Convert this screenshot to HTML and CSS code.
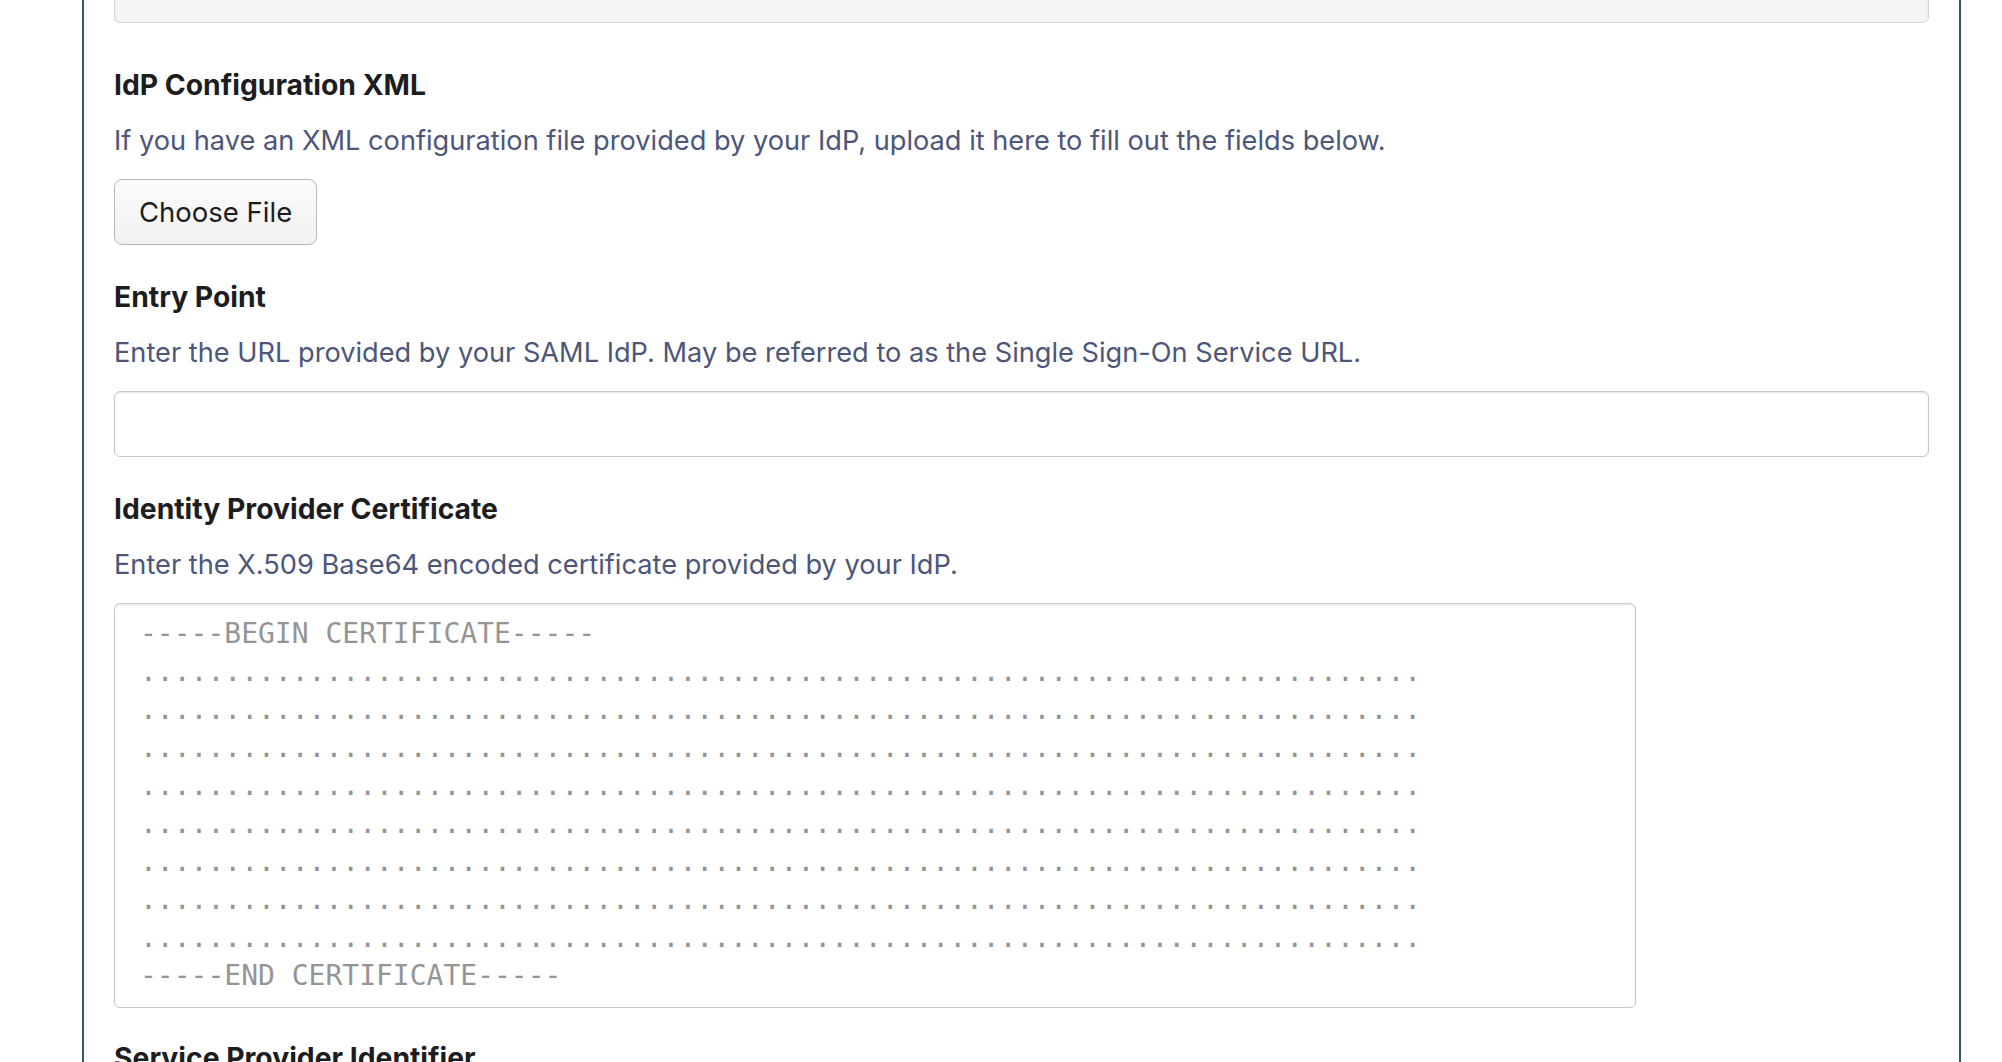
FILE: index.html
```html
<!DOCTYPE html>
<html lang="en">
<head>
    <meta charset="UTF-8">
    <meta name="viewport" content="width=device-width, initial-scale=1.0">
    <title>SAML Settings</title>
    <link rel="stylesheet" href="styles.css">
</head>
<body>
    <!-- SAML settings panel -->
    <div class="panel">
        <input type="text" class="text-input" disabled>

        <!-- IdP metadata upload -->
        <div class="field field-first">
            <h3 class="field-title">IdP Configuration XML</h3>
            <p class="field-desc">If you have an XML configuration file provided by your IdP, upload it here to fill out the fields below.</p>
            <label class="file-btn">
                Choose File
                <input type="file" id="idp-xml" accept=".xml">
            </label>
        </div>

        <!-- Entry point -->
        <div class="field">
            <h3 class="field-title">Entry Point</h3>
            <p class="field-desc">Enter the URL provided by your SAML IdP. May be referred to as the Single Sign-On Service URL.</p>
            <input type="text" class="text-input" id="entry-point">
        </div>

        <!-- Certificate -->
        <div class="field">
            <h3 class="field-title">Identity Provider Certificate</h3>
            <p class="field-desc">Enter the X.509 Base64 encoded certificate provided by your IdP.</p>
            <textarea class="cert-input" id="idp-cert" rows="10"></textarea>
        </div>

        <!-- Issuer -->
        <div class="field field-tight">
            <h3 class="field-title">Service Provider Identifier</h3>
            <p class="field-desc">Enter a unique identifier for this service provider.</p>
            <input type="text" class="text-input" id="issuer">
        </div>
    </div>

    <script>
        // Build the certificate placeholder: header, 8 rows of dots, footer
        const rows = ['-----BEGIN CERTIFICATE-----'];
        for (let i = 0; i < 8; i++) {
            rows.push('.'.repeat(76));
        }
        rows.push('-----END CERTIFICATE-----');
        document.getElementById('idp-cert').placeholder = rows.join('\n');
    </script>
</body>
</html>
```

FILE: styles.css
```css
html, body {
    height: 100%;
}

body {
    font-family: Inter, "Liberation Sans", Arial, sans-serif;
    background-color: #ffffff;
    margin: 0;
    padding: 0;
    overflow: hidden;
}

/* Panel */
.panel {
    margin-top: -43px;
    margin-left: 82px;
    width: 1879px;
    min-height: 1200px;
    box-sizing: border-box;
    padding: 0 30px;
    border-left: 2px solid #2a5c64;
    border-right: 2px solid #2a5c64;
}

.field {
    margin-top: 35px;
}

.field-first {
    margin-top: 45px;
}

.field-tight {
    margin-top: 33px;
}

.field-title {
    font-size: 28.3px;
    line-height: 34px;
    font-weight: bold;
    color: #1d1d1f;
    margin: 0 0 24px 0;
}

.field-desc {
    font-size: 27.2px;
    line-height: 30px;
    color: #4d5679;
    margin: 0 0 23px 0;
}

/* Inputs */
.text-input {
    display: block;
    width: 100%;
    height: 66px;
    box-sizing: border-box;
    padding: 0 20px;
    font-family: inherit;
    font-size: 26px;
    border: 1px solid #c9c9c9;
    border-radius: 6px;
    background-color: #ffffff;
    box-shadow: inset 0 1px 2px rgba(0, 0, 0, 0.12);
}

.text-input:disabled {
    background-color: #f4f4f4;
    border-color: #d6d6d6;
}

.file-btn {
    display: inline-flex;
    align-items: center;
    height: 66px;
    box-sizing: border-box;
    padding: 0 24px;
    font-size: 27.5px;
    color: #1d1d1f;
    background: linear-gradient(#fbfbfb, #f1f1f1);
    border: 1.5px solid #b9b9b9;
    border-radius: 8px;
    cursor: pointer;
}

.file-btn input {
    display: none;
}

.cert-input {
    display: block;
    width: 1522px;
    height: 405px;
    box-sizing: border-box;
    padding: 11px 25px 12px 25px;
    font-family: "DejaVu Sans Mono", Menlo, monospace;
    font-size: 28px;
    line-height: 38px;
    color: #333;
    border: 1px solid #c9c9c9;
    border-radius: 6px;
    box-shadow: inset 0 1px 2px rgba(0, 0, 0, 0.12);
    resize: none;
    overflow: hidden;
}

.cert-input::placeholder {
    color: #959595;
}
```
